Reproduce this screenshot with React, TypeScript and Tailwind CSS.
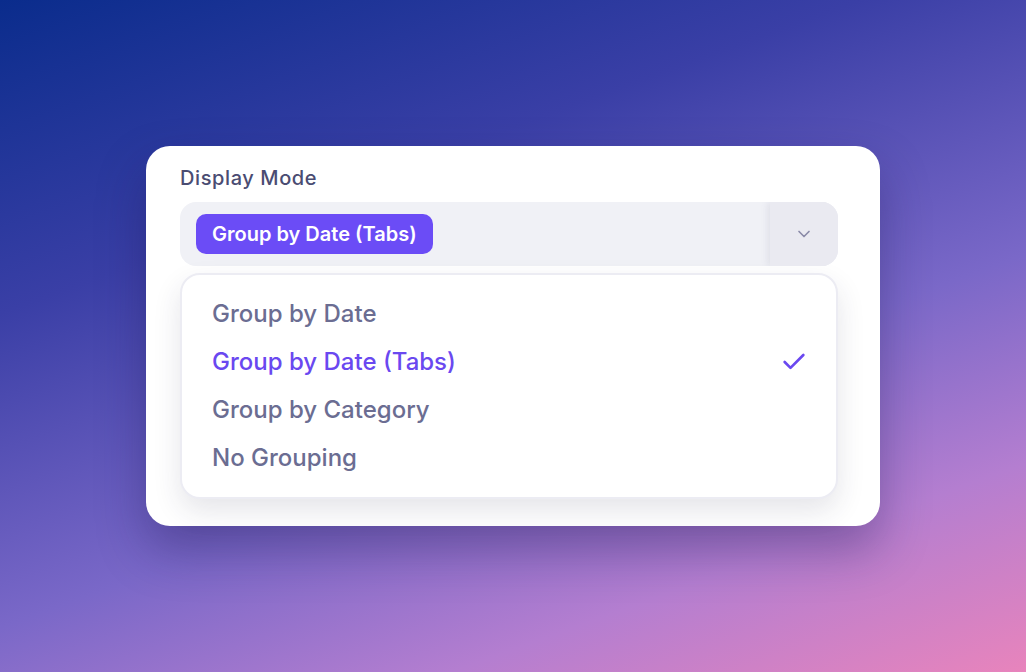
import { Check, ChevronDown } from 'lucide-react'

const options = ['Group by Date', 'Group by Date (Tabs)', 'Group by Category', 'No Grouping']

export default function App() {
  const selected = 'Group by Date (Tabs)'

  return (
    <div className="flex h-screen w-full items-center justify-center bg-[linear-gradient(160deg,#0a2c8c_0%,#3a3fa6_30%,#7a68c8_60%,#b47ed0_80%,#e884bc_100%)] font-['Inter',sans-serif]">
      <div className="w-[734px] rounded-[24px] bg-white pl-[34px] pr-[42px] pt-[18px] pb-[27px] shadow-[0_24px_48px_rgba(30,20,80,0.35)]">
        {/* label */}
        <div className="mb-[10px] text-[20px] leading-[28px] font-medium tracking-[0.6px] text-[#4a4c72]">
          Display Mode
        </div>

        {/* select trigger */}
        <div className="flex h-16 items-center overflow-hidden rounded-2xl bg-[#f0f1f6]">
          <div className="flex flex-1 items-center pl-4">
            <span className="flex h-10 items-center rounded-[10px] bg-[#6b4cf6] px-4 text-[20px] font-semibold text-white">
              {selected}
            </span>
          </div>
          <div className="flex h-full w-[68px] items-center justify-center bg-[#eaeaf1] shadow-[-3px_0_6px_rgba(120,120,160,0.12)]">
            <ChevronDown size={20} strokeWidth={2} className="text-[#8a8aa8]" />
          </div>
        </div>

        {/* dropdown list */}
        <div className="mt-[7px] rounded-[20px] border-2 border-[#ececf3] bg-white py-[15px] pl-[30px] pr-[28px] shadow-[0_12px_28px_rgba(40,40,70,0.12)]">
          {options.map((opt) => (
            <div key={opt} className="flex h-12 items-center justify-between">
              <span
                className={
                  opt === selected
                    ? 'text-[24px] font-medium text-[#6a48f0]'
                    : 'text-[24px] font-medium text-[#6b6d92]'
                }
              >
                {opt}
              </span>
              {opt === selected && <Check size={28} strokeWidth={2.3} className="text-[#6a48f0]" />}
            </div>
          ))}
        </div>
      </div>
    </div>
  )
}
